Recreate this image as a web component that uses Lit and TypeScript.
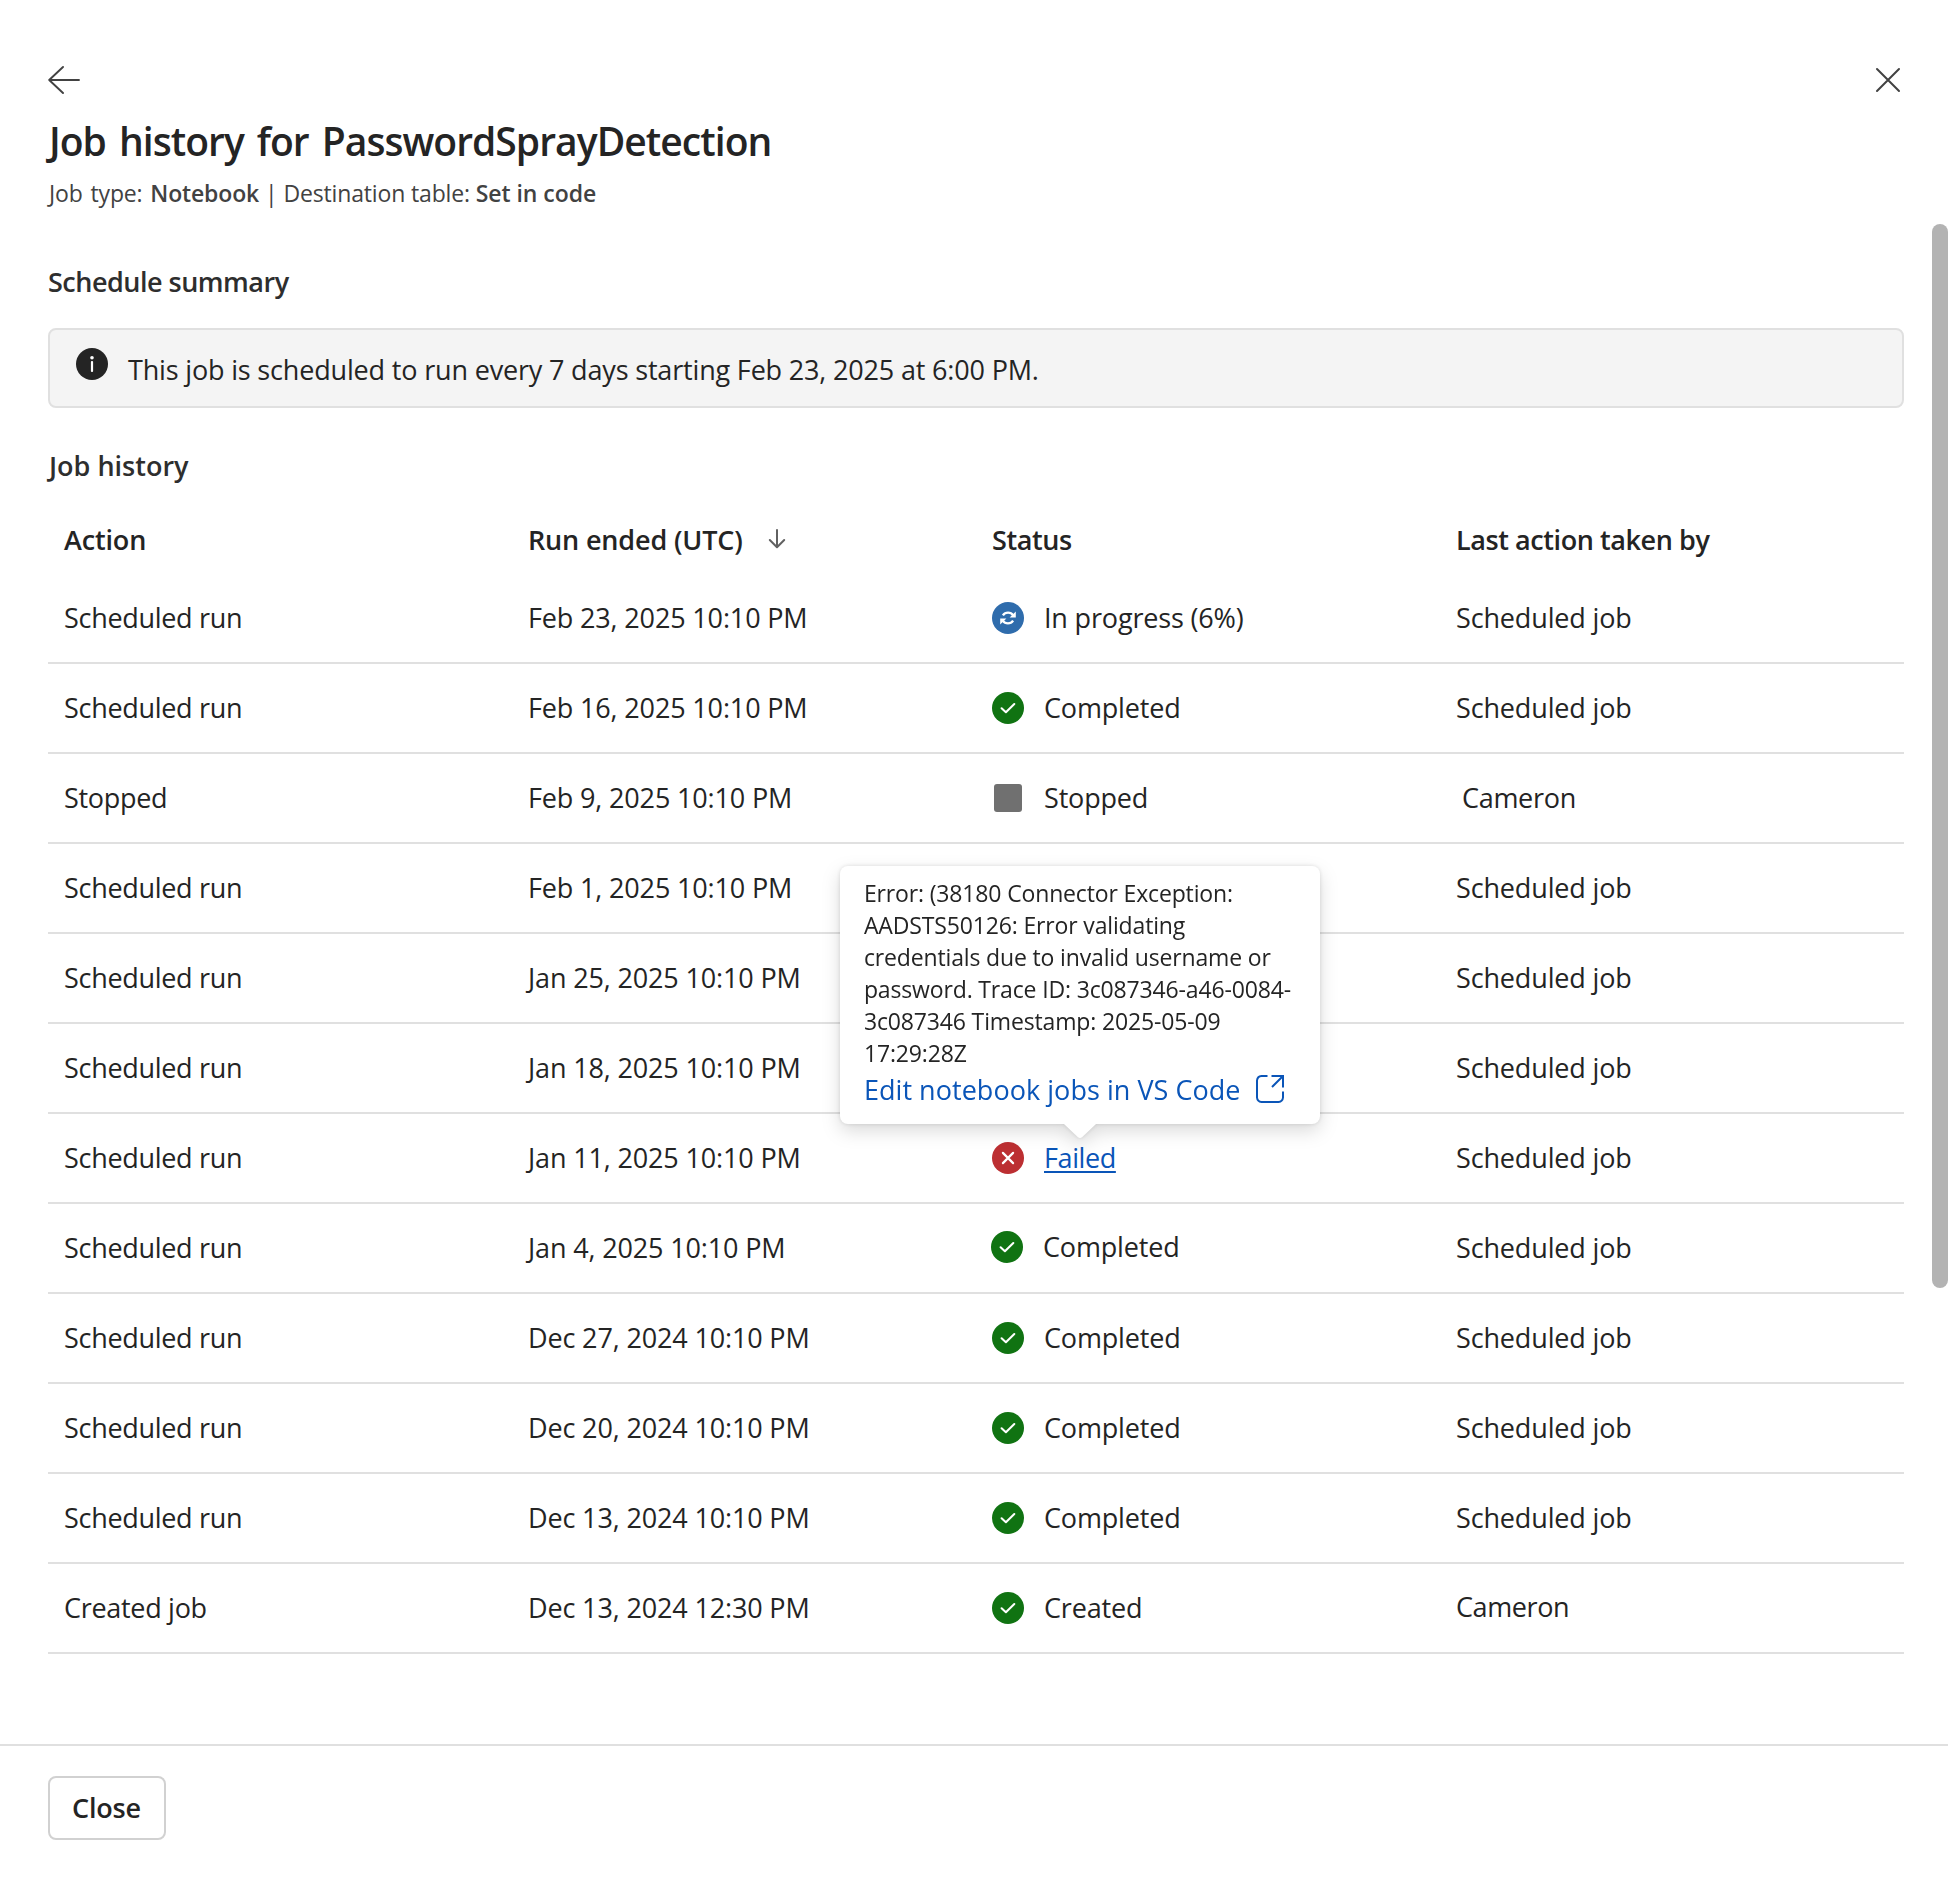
import { LitElement, html, css, svg, nothing } from "lit";
import { customElement, property } from "lit/decorators.js";
import { classMap } from "lit/directives/class-map.js";

type Status = "progress" | "done" | "stopped" | "failed";

interface JobRun {
  action: string;
  ended: string;
  status?: Status;
  label?: string;
  by: string;
  nudge?: "status-nudge" | "by-indent" | "by-raise";
}

const run = (ended: string, status?: Status, label?: string, extra: Partial<JobRun> = {}): JobRun => ({
  action: "Scheduled run",
  ended,
  status,
  label,
  by: "Scheduled job",
  ...extra,
});

// Runs without a status sit behind the open error tooltip.
const RUNS: JobRun[] = [
  run("Feb 23, 2025 10:10 PM", "progress", "In progress (6%)"),
  run("Feb 16, 2025 10:10 PM", "done", "Completed"),
  run("Feb 9, 2025 10:10 PM", "stopped", "Stopped", { action: "Stopped", by: "Cameron", nudge: "by-indent" }),
  run("Feb 1, 2025 10:10 PM"),
  run("Jan 25, 2025 10:10 PM"),
  run("Jan 18, 2025 10:10 PM"),
  run("Jan 11, 2025 10:10 PM", "failed", "Failed"),
  run("Jan 4, 2025 10:10 PM", "done", "Completed", { nudge: "status-nudge" }),
  run("Dec 27, 2024 10:10 PM", "done", "Completed"),
  run("Dec 20, 2024 10:10 PM", "done", "Completed"),
  run("Dec 13, 2024 10:10 PM", "done", "Completed"),
  run("Dec 13, 2024 12:30 PM", "done", "Created", { action: "Created job", by: "Cameron", nudge: "by-raise" }),
];

const GLYPHS = {
  progress: svg`
    <circle cx="16" cy="16" r="16" fill="#2f6cac" />
    <path d="M10.9 13.4A6.2 6.2 0 0 1 21.2 13.4M21.1 18.6A6.2 6.2 0 0 1 10.8 18.6" fill="none" stroke="#fff" stroke-width="2.3" />
    <path d="M23.8 9.6V15.5H17.6ZM8.2 22.4V16.5H14.4Z" fill="#fff" />`,
  done: svg`
    <circle cx="16" cy="16" r="16" fill="#107312" />
    <path d="M9.6 16.3L13.9 20.2L22.3 12" fill="none" stroke="#fff" stroke-width="2.1" stroke-linecap="round" stroke-linejoin="round" />`,
  stopped: svg`<rect x="2" y="2" width="28" height="28" rx="3" fill="#707070" />`,
  failed: svg`
    <circle cx="16" cy="16" r="16" fill="#bc2f32" />
    <path d="M10.9 10.9L21.1 21.1M21.1 10.9L10.9 21.1" fill="none" stroke="#fff" stroke-width="2.2" stroke-linecap="round" />`,
};

@customElement("status-icon")
export class StatusIcon extends LitElement {
  @property() kind: Status = "done";

  static styles = css`
    :host { display: block; width: 32px; height: 32px; flex: none; }
    .glyph { display: block; }
  `;

  render() {
    return html`<svg class="glyph" width="32" height="32" viewBox="0 0 32 32">${GLYPHS[this.kind]}</svg>`;
  }
}

@customElement("error-tooltip")
export class ErrorTooltip extends LitElement {
  static styles = css`
    :host {
      position: absolute;
      left: 50%;
      bottom: 54px;
      transform: translateX(-50%);
      width: 480px;
      height: 258px;
      box-sizing: border-box;
      padding: 11px 20px 14px 24px;
      background: #fff;
      border-radius: 8px;
      filter: drop-shadow(0 0 2px rgba(0, 0, 0, 0.12)) drop-shadow(0 7px 9px rgba(0, 0, 0, 0.14));
      white-space: normal;
      z-index: 2;
    }
    .message { margin: 0; font-size: 23px; line-height: 32px; letter-spacing: -0.15px; color: #242424; }
    .link { display: flex; gap: 13px; margin-top: 1px; font-size: 27px; line-height: 40px; letter-spacing: 0.04px; color: #0a55b8; text-decoration: none; white-space: nowrap; }
    .open { display: block; flex: none; margin-top: 3px; }
    .caret { position: absolute; left: 224px; top: 257px; display: block; }
  `;

  render() {
    return html`
      <p class="message">
        Error: (38180 Connector Exception: AADSTS50126: Error validating credentials due to invalid
        username or password. Trace ID: 3c087346-a46-0084-3c087346 Timestamp: 2025-05-09 17:29:28Z
      </p>
      <a class="link">
        <span>Edit notebook jobs in VS Code</span>
        <svg class="open" width="32" height="32" viewBox="0 0 32 32" fill="none" stroke="#0a55b8" stroke-width="2">
          <path d="M13.5 3H7.500A5 5 0 0 0 3 7.500V24.500A5 5 0 0 0 7.500 29H24.500A5 5 0 0 0 29 24.500V18.500" />
          <path d="M17.500 3H29V14.500M29 3L18 14" />
        </svg>
      </a>
      <svg class="caret" width="32" height="16" viewBox="0 0 32 16">
        <path d="M0 0H32V1L18 14.200Q16 15.800 14 14.200L0 1Z" fill="#fff" />
      </svg>
    `;
  }
}

@customElement("app-root")
export class AppRoot extends LitElement {
  static styles = css`
    :host {
      display: flex;
      flex-direction: column;
      width: 100%;
      height: 1884px;
      box-sizing: border-box;
      overflow: hidden;
      background: #fff;
      color: #242424;
      font-family: "Open Sans", "Noto Sans", sans-serif;
      font-size: 27px;
      line-height: 40px;
    }
    .head { height: 213px; flex: none; box-sizing: border-box; padding: 64px 44px 0 48px; }
    .bar { display: flex; justify-content: space-between; height: 51px; }
    .icon { display: block; flex: none; }
    .title { margin: 0 0 0 1px; font-size: 39px; line-height: 52px; font-weight: 600; letter-spacing: -0.95px; word-spacing: 3.8px; }
    .meta { display: flex; margin: 10px 0 0 1px; font-size: 23px; line-height: 32px; color: #424242; white-space: pre; letter-spacing: -0.15px; }
    .kind { word-spacing: 2px; }
    .strong { font-weight: 600; }
    .divider { margin: 0 6px 0 0; }
    .target { letter-spacing: -0.05px; }
    .body { flex: 1; min-height: 0; display: flex; }
    .content { flex: 1; padding: 0 28px 0 48px; }
    .track { width: 16px; padding-top: 11px; }
    .thumb { height: 1064px; border-radius: 8px; background: #b3b3b3; }
    .section { margin: 0; font-size: 27px; line-height: 40px; font-weight: 600; color: #2e2e2e; }
    .summary { padding-top: 49px; letter-spacing: -0.5px; }
    .notice {
      display: flex;
      gap: 20px;
      height: 80px;
      margin-top: 26px;
      box-sizing: border-box;
      padding: 18px 26px 0;
      border: 2px solid #e0e0e0;
      border-radius: 8px;
      background: #f4f4f4;
    }
    .notice-text { margin-top: 2px; letter-spacing: -0.17px; }
    .history { margin: 38px 0 0 1px; }
    .row { display: grid; grid-template-columns: repeat(4, 1fr); align-items: center; height: 90px; box-sizing: border-box; border-bottom: 2px solid #e0e0e0; }
    .columns { height: 70px; margin-top: 18px; border: none; font-weight: 600; padding-top: 2px; }
    .cell { display: flex; align-items: center; padding-left: 16px; white-space: nowrap; letter-spacing: -0.15px; }
    .action { letter-spacing: -0.3px; }
    .sorted { gap: 22px; }
    .sort-icon { margin-top: -3px; }
    .tight { letter-spacing: -0.42px; }
    .status { gap: 20px; letter-spacing: -0.17px; }
    .anchor { position: relative; }
    .failed { color: #0a55b8; text-decoration: underline; text-decoration-thickness: 2px; text-underline-offset: 3px; letter-spacing: -0.4px; }
    .status-nudge { transform: translate(-1px, -1px); }
    .by-indent { padding-left: 22px; letter-spacing: -0.3px; }
    .by-raise { padding-bottom: 3px; letter-spacing: -0.4px; }
    .foot { flex: none; height: 140px; box-sizing: border-box; border-top: 2px solid #e0e0e0; padding: 30px 48px; }
    .close {
      display: block;
      width: 118px;
      height: 64px;
      padding: 0 1px 0 0;
      border: 2px solid #d1d1d1;
      border-radius: 8px;
      background: #fff;
      color: #242424;
      font: 600 27px/40px "Open Sans", "Noto Sans", sans-serif;
      letter-spacing: -0.2px;
    }
  `;

  private renderStatus(r: JobRun) {
    if (!r.status) return nothing;
    return html`
      <status-icon kind=${r.status}></status-icon>
      ${r.status === "failed"
        ? html`<span class="anchor"><a class="failed">${r.label}</a><error-tooltip></error-tooltip></span>`
        : html`<span>${r.label}</span>`}
    `;
  }

  private renderRow(r: JobRun) {
    return html`
      <div class="row">
        <div class="cell action">${r.action}</div>
        <div class="cell">${r.ended}</div>
        <div class=${classMap({ cell: true, status: true, "status-nudge": r.nudge === "status-nudge" })}>${this.renderStatus(r)}</div>
        <div class=${classMap({ cell: true, "by-indent": r.nudge === "by-indent", "by-raise": r.nudge === "by-raise" })}>${r.by}</div>
      </div>
    `;
  }

  render() {
    return html`
      <header class="head">
        <div class="bar">
          <svg class="icon" width="32" height="32" viewBox="0 0 32 32" fill="none" stroke="#424242" stroke-width="1.9" stroke-linecap="round" stroke-linejoin="round">
            <path d="M1.200 16H31M15 3L1.200 16L15 29" />
          </svg>
          <svg class="icon" width="32" height="32" viewBox="0 0 32 32" fill="none" stroke="#424242" stroke-width="2" stroke-linecap="round">
            <path d="M5 5L27 27M27 5L5 27" />
          </svg>
        </div>
        <h1 class="title">Job history for PasswordSprayDetection</h1>
        <div class="meta"><span class="kind">Job type: </span><span class="strong">Notebook</span><span class="divider"> |</span><span>Destination table: </span><span class="strong target">Set in code</span></div>
      </header>
      <main class="body">
        <div class="content">
          <h2 class="section summary">Schedule summary</h2>
          <div class="notice">
            <svg class="icon" width="32" height="32" viewBox="0 0 32 32">
              <circle cx="16" cy="16" r="16" fill="#242424" />
              <circle cx="16" cy="9.700" r="1.800" fill="#fff" />
              <rect x="14.900" y="13" width="2.200" height="11" rx="1" fill="#fff" />
            </svg>
            <span class="notice-text">This job is scheduled to run every 7 days starting Feb 23, 2025 at 6:00 PM.</span>
          </div>
          <h2 class="section history">Job history</h2>
          <div class="row columns">
            <div class="cell">Action</div>
            <div class="cell sorted">
              <span>Run ended (UTC)</span>
              <svg class="icon sort-icon" width="24" height="24" viewBox="0 0 24 24" fill="none" stroke="#616161" stroke-width="2" stroke-linecap="round" stroke-linejoin="round">
                <path d="M12 3V20M4.800 13L12 20.200L19.200 13" />
              </svg>
            </div>
            <div class="cell tight">Status</div>
            <div class="cell tight">Last action taken by</div>
          </div>
          ${RUNS.map((r) => this.renderRow(r))}
        </div>
        <div class="track"><div class="thumb"></div></div>
      </main>
      <footer class="foot"><button class="close">Close</button></footer>
    `;
  }
}
